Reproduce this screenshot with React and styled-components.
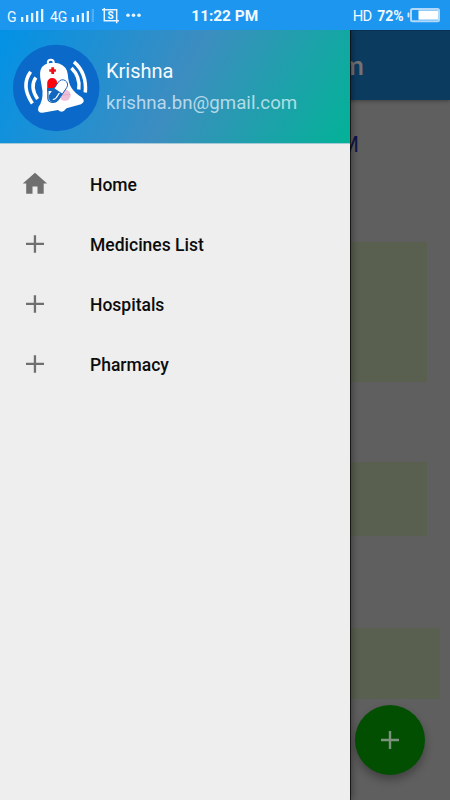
import React from "react";
import styled, { createGlobalStyle } from "styled-components";

const GlobalStyle = createGlobalStyle`
  body {
    margin: 0;
    font-family: Roboto, "Liberation Sans", sans-serif;
  }
`;

const Screen = styled.div`
  position: relative;
  width: 450px;
  height: 800px;
  overflow: hidden;
  display: flex;
  flex-direction: column;
  background: #5f5f5f;
`;

const StatusBar = styled.div`
  height: 30px;
  flex: none;
  display: flex;
  align-items: center;
  justify-content: space-between;
  background: #1d96f0;
  color: #eaf6ff;
`;

const StatusIcons = styled.svg`
  display: block;
  flex: none;
`;

const StatusText = styled.text`
  font-size: ${(props) => props.$size}px;
  font-weight: ${(props) => props.$weight || 400};
  letter-spacing: ${(props) => props.$spacing || 0}px;
  fill: #f2f9ff;
`;

const Body = styled.div`
  position: relative;
  flex: 1;
  display: flex;
  justify-content: flex-end;
  overflow: hidden;
`;

const Page = styled.div`
  width: 450px;
  display: flex;
  flex-direction: column;
`;

const AppBar = styled.div`
  height: 70px;
  box-sizing: border-box;
  border-top: 1px solid #0a3150;
  padding: 19px 86px 0 0;
  background: #0b3c60;
  color: #737373;
  font-size: 26px;
  font-weight: 500;
  line-height: 32px;
  text-align: right;
  box-shadow: 0 1px 4px rgba(0, 0, 0, 0.35);
`;

const PageTitle = styled.div`
  height: 30px;
  padding: 30px 91px 0 0;
  margin-bottom: 82px;
  color: #10154a;
  font-size: 22px;
  line-height: 30px;
  text-align: right;
`;

const PageCard = styled.div`
  height: ${(props) => props.$height}px;
  margin: 0 ${(props) => props.$right}px ${(props) => props.$gap}px 10px;
  background: #596050;
`;

const Fab = styled.div`
  position: absolute;
  right: 25px;
  bottom: 25px;
  width: 70px;
  height: 70px;
  border-radius: 50%;
  display: flex;
  align-items: center;
  justify-content: center;
  background: #024f02;
  box-shadow: 0 5px 8px rgba(0, 0, 0, 0.3);
`;

const Drawer = styled.div`
  position: absolute;
  left: 0;
  top: 0;
  bottom: 0;
  width: 350px;
  background: #eeeeee;
  box-shadow: 1px 0 0 rgba(0, 0, 0, 0.65), 2px 0 7px rgba(0, 0, 0, 0.4);
`;

const Header = styled.div`
  height: 113px;
  display: flex;
  border-bottom: 1px solid #a5c9d6;
  background: linear-gradient(117deg, #0292e6 0%, #3c8dc0 51%, #02b297 100%);
`;

const Logo = styled.svg`
  margin: 14px 0 0 12px;
  flex: none;
`;

const Account = styled.div`
  padding: 28px 0 0 6px;
`;

const Name = styled.div`
  font-size: 20px;
  line-height: 26px;
  color: #f7fbff;
`;

const Email = styled.div`
  margin-top: 7px;
  font-size: 18.7px;
  line-height: 25px;
  color: rgba(240, 250, 255, 0.7);
`;

const Menu = styled.div`
  padding-top: 10px;
`;

const MenuItem = styled.div`
  height: 60px;
  padding-left: 20px;
  display: flex;
  align-items: center;
  gap: 40px;
  font-size: 17.5px;
  font-weight: 500;
  color: #0c0c0c;
`;

const Label = styled.span`
  padding-top: 2px;
`;

const items = [
  { label: "Home", icon: "home" },
  { label: "Medicines List", icon: "plus" },
  { label: "Hospitals", icon: "plus" },
  { label: "Pharmacy", icon: "plus" }
];

const icons = {
  home: "M12.5 24.8V17.5h5v7.3h6.2V14.6h3.4L15 3.8 2.8 14.6h3.4v10.2z",
  plus: "M13.8 6.2h2.3v7.6H24V16h-7.9v7.8h-2.3V16H6v-2.2h7.8z"
};

const BellLogo = () => (
  <Logo width="88" height="88" viewBox="12 44 88 88">
    <circle cx="56.2" cy="88" r="43.3" fill="#0b69ca" />
    <g fill="none" stroke="#fff" strokeWidth="3.5">
      <path d="M30.6 71.8Q20.5 86 32.4 103.5" />
      <path d="M35.8 77.5Q29.5 87 37.6 99" />
      <path d="M74 61.8Q87 73 85.3 92.5" />
      <path d="M71.5 68Q80.5 77 78.8 89.5" />
    </g>
    <circle cx="50.8" cy="62.8" r="3" fill="none" stroke="#fff" strokeWidth="2" />
    <path
      fill="#fff"
      d="M45 64.5Q51 61.5 59 63.4 66.8 66 67.8 74.5C68.5 86 72.5 91.5 82 97.5Q86 101.5 81 104.2L66.5 108.3Q62.5 114 58 110L42.5 112.8Q36.8 113 38.5 107 43 101 42.5 91L40.2 77.5Q39 68 45 64.5z"
    />
    <path fill="#eb1019" d="M51.3 67.2h2.8v2h1.8v2.6h-1.8v2.3h-2.8v-2.3h-2v-2.6h2z" />
    <path fill="#fa0510" d="M47.2 91.5V83a5 5 0 0 1 10 0v8.5z" />
    <path fill="#1268be" d="M47.2 88v10a5 5 0 0 0 10 0V88z" />
    <path fill="#fff" d="M48.6 91v7.5a3.4 3.4 0 0 0 4 3.2V91z" />
    <circle cx="65" cy="95.2" r="5.6" fill="#efbfd7" />
    <path d="M59.8 95.4l10.4-1" stroke="#dca5c9" strokeWidth=".8" />
    <g transform="rotate(34 58.4 91)">
      <rect
        x="53.4"
        y="78.5"
        width="10"
        height="25"
        rx="5"
        fill="#fff"
        stroke="#155eb8"
        strokeWidth=".9"
      />
      <path fill="#1268be" d="M53.4 91h10v7.5a5 5 0 0 1-10 0z" />
      <path
        d="M60.3 92.5v5.5q-.2 2-1.4 2.8"
        fill="none"
        stroke="#fff"
        strokeWidth="1.2"
        strokeLinecap="round"
      />
    </g>
  </Logo>
);

const SignalBars = ({ x, faded }) => (
  <g fill="#e5f4ff">
    {[5, 7, 9, 11, 13].map((height, i) => (
      <rect
        key={height}
        x={x + i * 5}
        y={22 - height}
        width="2.3"
        height={height}
        opacity={faded && i === 4 ? 0.25 : 1}
      />
    ))}
  </g>
);

export default () => (
  <Screen>
    <GlobalStyle />
    <StatusBar>
      <StatusIcons width="150" height="30">
        <StatusText x="7" y="22" $size={14}>
          G
        </StatusText>
        <SignalBars x={21} />
        <StatusText x="50" y="22" $size={14} $spacing={-0.2}>
          4G
        </StatusText>
        <SignalBars x={71.7} faded />
        <path
          d="M102 9.7h14.7V23.2M104.3 8v12.8h14.7"
          fill="none"
          stroke="#e5f4ff"
          strokeWidth="1.5"
        />
        <StatusText x="107.4" y="19" $size={10} $weight={700}>
          S
        </StatusText>
        <g fill="#e5f4ff">
          <circle cx="128" cy="15.3" r="1.8" />
          <circle cx="133.5" cy="15.3" r="1.8" />
          <circle cx="139" cy="15.3" r="1.8" />
        </g>
      </StatusIcons>
      <StatusIcons width="150" height="30" viewBox="150 0 150 30">
        <StatusText x="191.3" y="21.3" $size={15.4} $weight={700}>
          11:22 PM
        </StatusText>
      </StatusIcons>
      <StatusIcons width="150" height="30" viewBox="300 0 150 30">
        <StatusText x="352.8" y="20.8" $size={14.8} $spacing={-0.8}>
          HD
        </StatusText>
        <StatusText x="377.3" y="20.8" $size={14} $weight={700}>
          72%
        </StatusText>
        <rect x="407.5" y="12.5" width="2" height="5" rx="1" fill="#cfe9ff" />
        <rect
          x="411"
          y="9"
          width="28"
          height="12.2"
          rx="1.5"
          fill="none"
          stroke="#b2d9fb"
          strokeWidth="2"
        />
        <rect x="418.5" y="10.5" width="19.5" height="9.2" fill="#fff" />
      </StatusIcons>
    </StatusBar>
    <Body>
      <Page>
        <AppBar>m</AppBar>
        <PageTitle>M</PageTitle>
        <PageCard $height={140} $right={23} $gap={80} />
        <PageCard $height={74} $right={23} $gap={92} />
        <PageCard $height={71} $right={10} $gap={0} />
      </Page>
      <Fab>
        <svg width="18" height="18">
          <path d="M7.8 0h2.4v7.8H18v2.4h-7.8V18H7.8v-7.8H0V7.8h7.8z" fill="#7d927d" />
        </svg>
      </Fab>
      <Drawer>
        <Header>
          <BellLogo />
          <Account>
            <Name>Krishna</Name>
            <Email>krishna.bn@gmail.com</Email>
          </Account>
        </Header>
        <Menu>
          {items.map((item) => (
            <MenuItem key={item.label}>
              <svg width="30" height="30">
                <path d={icons[item.icon]} fill="#6f6f6f" />
              </svg>
              <Label>{item.label}</Label>
            </MenuItem>
          ))}
        </Menu>
      </Drawer>
    </Body>
  </Screen>
);
